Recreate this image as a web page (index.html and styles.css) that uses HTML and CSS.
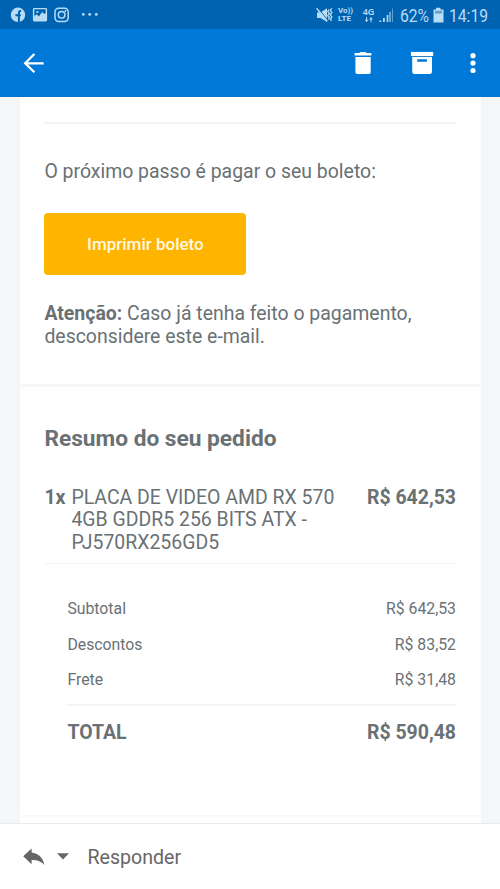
FILE: index.html
```html
<!DOCTYPE html>
<html lang="pt-BR">
<head>
<meta charset="utf-8">
<title>Resumo do pedido</title>
<link rel="stylesheet" href="styles.css">
</head>
<body>
<div class="screen">
  <div class="status">
    <svg class="status-left" width="100" height="29" viewBox="0 0 100 29" fill="none" stroke="#b8dcf6">
      <circle cx="18" cy="14.8" r="7.2" fill="#b8dcf6" stroke="none"/>
      <path d="M18.900 22v-9.200q0-2 2.200-1.700M15.400 15.300h5.400" stroke="#0063b1" stroke-width="2"/>
      <rect x="33.6" y="8.6" width="12.8" height="12.2" rx=".7" stroke-width="1.4"/>
      <path d="M33.800 21v-4.500l2.800-2.300 2.200 2.200 3.400-4.300 2 2 2.200-1.300V21z" fill="#b8dcf6" stroke="none"/>
      <circle cx="37.4" cy="12" r="1.1" fill="#b8dcf6" stroke="none"/>
      <rect x="55" y="8.2" width="13.2" height="13.2" rx="3.6" stroke-width="1.5"/>
      <circle cx="61.6" cy="14.8" r="3.3" stroke-width="1.5"/>
      <circle cx="65.5" cy="11" r=".9" fill="#b8dcf6" stroke="none"/>
      <g fill="#b8dcf6" stroke="none"><circle cx="83.3" cy="14.4" r="1.4"/><circle cx="89.7" cy="14.4" r="1.4"/><circle cx="96.3" cy="14.4" r="1.4"/></g>
    </svg>
    <div class="status-right">
      <svg class="mute" width="18" height="18" viewBox="0 0 18 18" fill="none" stroke="#b8dcf6">
        <path d="M1 6.500h3.500L11 2.200v13.600L4.500 12H1z" fill="#b8dcf6" stroke="none"/>
        <path d="M1.500 1.500l10.500 13" stroke="#0063b1" stroke-width="1"/>
        <path d="M.6 2.300l10.600 13.200" stroke-width="1.4"/>
        <path d="M13 3.500l-1.200 2 1.600 2-1.600 2 1.600 2-1.200 2M15.800 2.300l-1.500 2 1.600 2.300-1.600 2.200 1.600 2.200-1.600 2.300 1.300 1.500" stroke-width="1.3"/>
      </svg>
      <div class="volte"><span>Vo))</span><span>LTE</span></div>
      <div class="net"><span>4G</span>
        <svg width="10" height="6" viewBox="0 0 10 6" fill="#b8dcf6"><path d="M.8 2.800h1.300V0h1v2.800h1.300L2.600 5.200zM5.200 2.400h1.300v2.800h1V2.400h1.300L7 0z"/></svg>
      </div>
      <svg class="signal" width="15" height="16" viewBox="0 0 15 16" fill="#b8dcf6"><path d="M.3 13.500h2V15h-2zM4 11h1.800v4H4zM7.700 8h1.600v7H7.700z"/><path d="M10.300 5h1.500v10h-1.500z" opacity=".75"/><path d="M13 1.500h1V15h-1z" opacity=".5"/></svg>
      <span class="pct"><span class="narrow">62%</span></span>
      <svg class="battery" width="11" height="16" viewBox="0 0 11 16"><path d="M3 .7h4.500v1.700h3v13H.5v-13H3z" fill="#b8dcf6"/><path d="M2 3.800h7v2.700H2z" fill="#5d9fd3"/></svg>
      <span class="time"><span class="narrow">14:19</span></span>
    </div>
  </div>
  <header class="appbar">
    <svg class="back" width="22" height="22" viewBox="0 0 22 22" fill="none" stroke="#fff" stroke-width="2.3"><path d="M11.400 2L2.200 11.300l9.200 9M2.500 11.300h18.200"/></svg>
    <div class="actions">
      <svg class="trash" width="18" height="24" viewBox="0 0 18 24" fill="#fff"><path d="M.6 2.100h4.800L6.500.9h5l1 1.200h4.900v2.500H.6zM1.400 6h15.300v15.200q0 1.800-1.800 1.800H3.200q-1.800 0-1.800-1.800z"/></svg>
      <svg class="archive" width="24" height="24" viewBox="0 0 24 24" fill="#fff"><path d="M.9.9h22.300v4.200H.9z"/><path fill-rule="evenodd" d="M2.200 6.100H22v14.600q0 2.300-2.300 2.300H4.500q-2.300 0-2.300-2.300zM7.200 8.300v2.500h9.700V8.300z"/></svg>
      <svg class="more" width="6" height="22" viewBox="0 0 6 22" fill="#fff"><circle cx="3" cy="3.700" r="2.600"/><circle cx="3" cy="11.100" r="2.600"/><circle cx="3" cy="18.500" r="2.600"/></svg>
    </div>
  </header>
  <main class="mail">
    <div class="card">
      <section class="payment">
        <div class="rule"></div>
        <p class="next">O próximo passo é pagar o seu boleto:</p>
        <a class="button">Imprimir boleto</a>
        <p class="notice"><b>Atenção:</b> Caso já tenha feito o pagamento,<br>desconsidere este e-mail.</p>
      </section>
      <section class="summary">
        <h2>Resumo do seu pedido</h2>
        <div class="item">
          <b class="qty">1x</b>
          <p class="name">PLACA DE VIDEO AMD RX 570<br>4GB GDDR5 256 BITS ATX -<br>PJ570RX256GD5</p>
          <b class="price">R$ 642,53</b>
        </div>
        <div class="totals">
          <div class="row"><span>Subtotal</span><span>R$ 642,53</span></div>
          <div class="row"><span>Descontos</span><span>R$ 83,52</span></div>
          <div class="row"><span>Frete</span><span>R$ 31,48</span></div>
          <div class="row total"><b>TOTAL</b><b>R$ 590,48</b></div>
        </div>
      </section>
    </div>
  </main>
  <footer class="reply">
    <svg width="22" height="18" viewBox="0 0 22 18" fill="#666"><path d="M8.600.4v4.100Q19 5.500 21.500 17 16.500 11.700 8.600 12.100v4.200L.2 8.300z"/></svg>
    <svg class="caret" width="12" height="7" viewBox="0 0 12 7" fill="#666"><path d="M0 .3h12L6 6.500z"/></svg>
    <span>Responder</span>
  </footer>
</div>
</body>
</html>
```
FILE: styles.css
```css
* { box-sizing: border-box; }
body { margin: 0; font-family: Roboto, "Liberation Sans", sans-serif; color: #697174; }
p, h2 { margin: 0; }
svg { display: block; flex: none; }
.screen { width: 500px; height: 889px; display: flex; flex-direction: column; overflow: hidden; background: #fff; }
.status { height: 29px; flex: none; display: flex; justify-content: space-between; background: #0063b1; color: #b8dcf6; }
.status-right { display: flex; align-items: center; padding: 1px 12px 0 0; white-space: nowrap; }
.mute { margin-right: 4px; }
.volte { width: 16px; display: flex; flex-direction: column; font-size: 8px; line-height: 8.500px; font-weight: 700; margin-right: 8px; }
.net { width: 13px; display: flex; flex-direction: column; align-items: center; font: 600 9px/10px "Noto Sans", Roboto, sans-serif; margin-right: 4px; }
.signal { margin-right: 6px; }
.pct { width: 29px; margin-right: 4px; }
.time { width: 39px; }
.narrow { display: inline-block; font-size: 18px; transform: scaleX(.87); transform-origin: left center; }
.battery { margin-right: 5px; }
.appbar { height: 68px; flex: none; display: flex; align-items: center; justify-content: space-between; padding: 0 24px 0 23px; background: #0078d7; border-bottom: 1px solid #0b72c4; }
.actions { display: flex; align-items: center; }
.trash { margin-right: 38px; }
.archive { margin-right: 36px; }
.mail { flex: 1; min-height: 0; padding: 0 19px 0 20px; background: #f4f6f8; }
.card { height: 100%; background: #fff; }
.payment { height: 290px; padding: 25px 25px 0 24.400px; border-bottom: 3px solid #f6f7f8; }
.rule { height: 2px; background: #f2f3f5; }
.next { margin-top: 36px; font-size: 19.450px; line-height: 23px; white-space: nowrap; }
.button { display: flex; align-items: center; justify-content: center; width: 202px; height: 62px; margin-top: 30px; border-radius: 4px; background: #ffb400; color: #fff8e2; font-size: 17px; font-weight: 500; }
.notice { margin-top: 28px; font-size: 19.450px; line-height: 22.700px; white-space: nowrap; }
.summary { height: 430px; padding: 38px 25px 0 24.400px; border-bottom: 2px solid #f7f8f9; }
h2 { font-size: 22.700px; line-height: 28px; font-weight: 700; white-space: nowrap; }
.item { display: flex; height: 77.500px; margin-top: 33.700px; font-size: 19.450px; line-height: 22.700px; border-bottom: 1px solid #f3f4f5; white-space: nowrap; }
.qty { width: 27px; }
.price { margin-left: auto; }
.totals { padding: 26.300px 0 0 23px; }
.row { display: flex; align-items: center; justify-content: space-between; height: 35.700px; font-size: 15.800px; white-space: nowrap; }
.total { height: 56px; margin-top: 6px; border-top: 2px solid #f3f5f6; font-size: 19.450px; }
.reply { height: 66px; flex: none; display: flex; align-items: center; padding-left: 23px; border-top: 1px solid #e9eaeb; background: #fff; color: #666; font-size: 19.600px; }
.reply span { padding-top: 1px; }
.caret { margin: 0 18.500px 0 12px; }
```
